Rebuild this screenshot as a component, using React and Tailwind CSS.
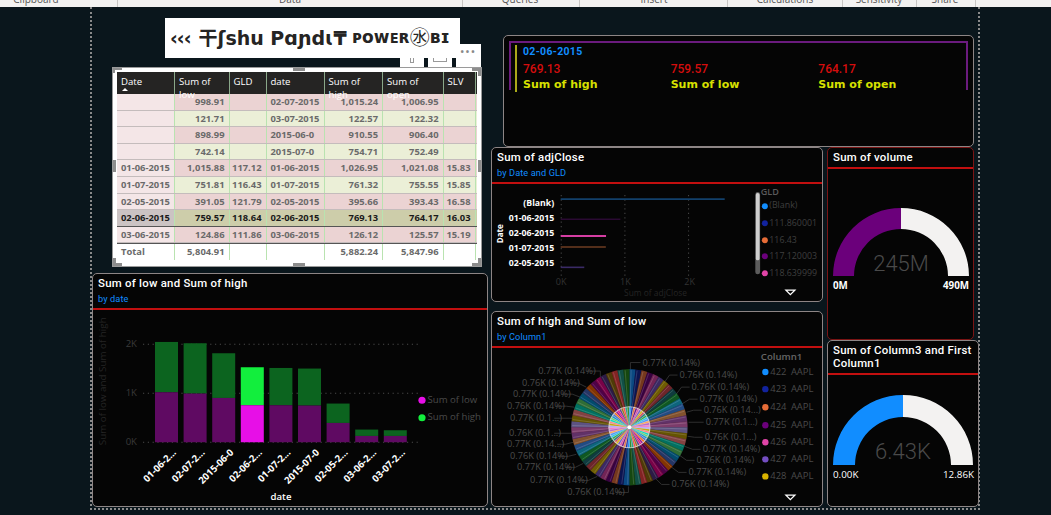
import React from "react";

const ribbon = [
  ["Clipboard", 116.5, 36],
  ["Data", 462, 290],
  ["Queries", 579, 520],
  ["Insert", 727, 654],
  ["Calculations", 842, 785],
  ["Sensitivity", 916, 879],
  ["Share", 975, 945],
];

const cols = [58, 54.5, 37, 58, 58.5, 60.5, 32];
const rows = [
  ["", "998.91", "", "02-07-2015", "1,015.24", "1,006.95", "", "p"],
  ["", "121.71", "", "03-07-2015", "122.57", "122.32", "", "g"],
  ["", "898.99", "", "2015-06-0", "910.55", "906.40", "", "p"],
  ["", "742.14", "", "2015-07-0", "754.71", "752.49", "", "g"],
  ["01-06-2015", "1,015.88", "117.12", "01-06-2015", "1,026.95", "1,021.08", "15.83", "p"],
  ["01-07-2015", "751.81", "116.43", "01-07-2015", "761.32", "755.55", "15.85", "g"],
  ["02-05-2015", "391.05", "121.79", "02-05-2015", "395.66", "393.43", "16.58", "p"],
  ["02-06-2015", "759.57", "118.64", "02-06-2015", "769.13", "764.17", "16.03", "h"],
  ["03-06-2015", "124.86", "111.86", "03-06-2015", "126.12", "125.57", "15.19", "p"],
];
const headers = ["Date", "Sum of low", "GLD", "date", "Sum of high", "Sum of open", "SLV"];
const rowBg = { p: "bg-[#ebd3d3]", g: "bg-[#ebefd7]", h: "bg-[#cdcdaa]" };

function Row({ cells, kind }) {
  const h = kind === "h";
  return (
    <div
      className={`flex h-[16.6px] border-b ${h ? "border-[#555] text-[#1a1a1a]" : "border-[#c4bcbc] text-[#6a6a6a]"} ${rowBg[kind]}`}
    >
      {cells.map((c, i) => (
        <div
          key={i}
          style={{ width: cols[i] }}
          className={`flex shrink-0 items-center border-r border-[#b9e3b0] px-[4px] leading-none ${
            i === 3 || i === 0 ? "justify-start" : "justify-end"
          } ${i === 0 ? (h ? "bg-[#cbc3c3]" : "bg-[#f4e6e7]") : ""}`}
        >
          {c}
        </div>
      ))}
    </div>
  );
}

function Table() {
  return (
    <div className="relative h-[198px] w-[368px] border-[4px] border-white bg-white font-['Open_Sans',sans-serif] text-[9.4px] font-bold outline outline-1 outline-[#9a9a9a]">
      <div className="flex h-[22px] bg-[#252423] font-normal text-white">
        {headers.map((c, i) => (
          <div
            key={i}
            style={{ width: cols[i] }}
            className="relative shrink-0 border-r border-[#8aa88a] px-[4px] pt-[3px] text-[9.6px] leading-[13px]"
          >
            {c}
            {i === 0 && <div className="absolute left-[5px] top-[16px] h-0 w-0 border-x-[3.5px] border-b-[3.5px] border-x-transparent border-b-white" />}
          </div>
        ))}
      </div>
      {rows.map((r, i) => (
        <Row key={i} cells={r.slice(0, 7)} kind={r[7]} />
      ))}
      <div className="flex h-[16.6px] border-t border-[#555] bg-white text-[#6a6a6a]">
        {["Total", "5,804.91", "", "", "5,882.24", "5,847.96", ""].map((c, i) => (
          <div
            key={i}
            style={{ width: cols[i] }}
            className={`flex shrink-0 items-center border-r border-[#b9e3b0] px-[4px] leading-none ${i === 0 ? "justify-start" : "justify-end"}`}
          >
            {c}
          </div>
        ))}
      </div>
      {/* selection handles */}
      <div className="absolute -left-[4px] -top-[4px] h-[5px] w-[9px] border-l-[2px] border-t-[2px] border-[#8d8d8d]" />
      <div className="absolute -right-[4px] -top-[4px] h-[8px] w-[9px] border-r-[3px] border-t-[3px] border-[#8d8d8d]" />
      <div className="absolute -bottom-[4px] -left-[4px] h-[8px] w-[9px] border-b-[3px] border-l-[3px] border-[#8d8d8d]" />
      <div className="absolute -bottom-[4px] -right-[4px] h-[8px] w-[9px] border-b-[3px] border-r-[3px] border-[#8d8d8d]" />
      <div className="absolute -top-[4px] left-[176px] h-[3px] w-[12px] bg-[#8d8d8d]" />
      <div className="absolute -bottom-[4px] left-[176px] h-[3px] w-[12px] bg-[#8d8d8d]" />
      <div className="absolute -left-[4px] top-[88px] h-[12px] w-[3px] bg-[#8d8d8d]" />
      <div className="absolute -right-[4px] top-[88px] h-[12px] w-[3px] bg-[#8d8d8d]" />
      {/* visual header */}
      <div className="absolute -top-[14px] left-[283px] flex h-[9px] w-[24px] items-start justify-center bg-white">
        <div className="h-[5px] w-[4px] border-x border-b border-[#999]" />
      </div>
      <div className="absolute -top-[14px] left-[311px] flex h-[9px] w-[24px] items-start justify-center bg-white">
        <div className="h-[4px] w-[14px] border-x border-b border-[#999]" />
      </div>
      <div className="absolute -top-[28px] left-[339px] flex h-[23px] w-[25px] items-center justify-center bg-white pb-[8px] text-[9px] font-bold tracking-[2px] text-[#888]">
        •••
      </div>
    </div>
  );
}

function Card({ title, sub, className = "", border = "border-[#8d8585]", children, lineW = "" }) {
  return (
    <div className={`flex flex-col overflow-hidden rounded-[5px] border bg-[#050505] ${border} ${className}`}>
      <div className="px-[5px] pt-[3px] font-['Roboto',sans-serif] text-white">
        <div className="text-[11.4px] font-medium leading-[13px] tracking-[0.25px]">{title}</div>
        {sub && <div className="mt-[2.5px] text-[9.2px] leading-[12px] tracking-[0.1px] text-[#118dff]">{sub}</div>}
      </div>
      <div className={`mt-[3px] h-[2px] shrink-0 bg-[#c20f0f] ${lineW}`} />
      <div className="relative min-h-0 flex-1">{children}</div>
    </div>
  );
}

const T = ({ x, y, a = "start", c = "fill-[#4a4a4a]", s = "text-[9.6px]", w = "", children, ...p }) => (
  <text x={x} y={y} textAnchor={a} dominantBaseline="middle" className={`font-['Open_Sans',sans-serif] ${c} ${s} ${w}`} {...p}>
    {children}
  </text>
);

const barData = [
  ["01-06-2...", 341.7, 392],
  ["02-07-2...", 343, 393.3],
  ["2015-06-0", 353, 397.7],
  ["02-06-2...", 367, 405],
  ["01-07-2...", 367.7, 405],
  ["2015-07-0", 368.3, 405.3],
  ["02-05-2...", 403.3, 422.7],
  ["03-06-2...", 429.3, 435.7],
  ["03-07-2...", 430, 435.7],
];

function BarChart() {
  return (
    <svg className="absolute left-0 top-0 block h-full w-full" viewBox="93 310 394 196">
      {[[344, "2K"], [393, "1K"], [442, "0K"]].map(([y, l]) => (
        <g key={l}>
          <line x1="143" x2="419" y1={y} y2={y} stroke="#4a4a4a" strokeDasharray="1.2 3.6" />
          <T x={137} y={y} a="end" c="fill-[#3a3a3a]" s="text-[9.6px]">{l}</T>
        </g>
      ))}
      <T x={0} y={0} a="middle" c="fill-[#242424]" s="text-[9.8px]" transform="translate(103.5 381) rotate(-90)">
        Sum of low and Sum of high
      </T>
      {barData.map(([l, top, mid], i) => {
        const x = 155 + i * 28.6;
        const h = i === 3;
        return (
          <g key={i}>
            <rect x={x} y={top} width={23} height={mid - top} fill={h ? "#12ee3d" : "#0c641f"} />
            <rect x={x} y={mid} width={23} height={442 - mid} fill={h ? "#e70fe7" : "#5f0a62"} />
            <T x={0} y={0} a="end" c="fill-white" s="text-[9.6px]" w="font-bold" transform={`translate(${x + 20} 451) rotate(-45)`}>
              {l}
            </T>
          </g>
        );
      })}
      <circle cx="422" cy="400" r="3.6" fill="#e70fe7" />
      <T x={427.5} y={400} c="fill-[#4a4a4a]" s="text-[9.6px]">Sum of low</T>
      <circle cx="422" cy="417.5" r="3.6" fill="#12ee3d" />
      <T x={427.5} y={417.5} c="fill-[#4a4a4a]" s="text-[9.6px]">Sum of high</T>
      <T x={281} y={497} a="middle" c="fill-white" s="text-[9.6px]" w="font-semibold">date</T>
    </svg>
  );
}

function AdjChart() {
  const labels = [["(Blank)", 204], ["01-06-2015", 219], ["02-06-2015", 233], ["01-07-2015", 248], ["02-05-2015", 263]];
  const bars = [[724, 199, "#12406b", 1.6], [620, 219, "#2a0a33", 1.6], [605.7, 235.7, "#d63ea3", 2], [605.5, 246.7, "#6e3c22", 1.6], [584, 267, "#3a2a66", 1.6]];
  const legend = [["(Blank)", 206, "#118dff"], ["111.860001", 223, "#12239e"], ["116.43", 240, "#e66c37"], ["117.120003", 256, "#6b007b"], ["118.639999", 273, "#e044a7"]];
  return (
    <svg className="absolute left-0 top-0 block h-full w-full" viewBox="492 184 329 117">
      {[561, 624.5, 688].map((x) => (
        <line key={x} x1={x} x2={x} y1="195" y2="276" stroke="#4a4a4a" strokeDasharray="1.2 3.2" />
      ))}
      {bars.map(([x2, y, c, w], i) => (
        <line key={i} x1="560.5" x2={x2} y1={y} y2={y} stroke={c} strokeWidth={w} />
      ))}
      {labels.map(([l, y]) => (
        <T key={l} x={554} y={y} a="end" c="fill-white" s="text-[8.7px]" w="font-bold">{l}</T>
      ))}
      <T x={0} y={0} a="middle" c="fill-white" s="text-[8px]" w="font-bold" transform="translate(500.5 233.5) rotate(-90)">Date</T>
      {[[561, "0K"], [625, "1K"], [689, "2K"]].map(([x, l]) => (
        <T key={l} x={x} y={282} a="middle" c="fill-[#333]" s="text-[9px]">{l}</T>
      ))}
      <T x={655} y={293} a="middle" c="fill-[#242424]" s="text-[8.4px]">Sum of adjClose</T>
      <rect x="754.5" y="192" width="4.8" height="82" rx="2.4" fill="#5c5c5c" />
      <rect x="755" y="193" width="3.8" height="67" rx="1.9" fill="#cfcfcf" />
      <T x={760} y={193} c="fill-[#5a5a5a]" s="text-[9px]" w="font-semibold">GLD</T>
      {legend.map(([l, y, c]) => (
        <g key={l}>
          <circle cx="764" cy={y} r="3" fill={c} />
          <T x={768.5} y={y} c="fill-[#3f3f3f]" s="text-[8.8px]">{l}</T>
        </g>
      ))}
      <path d="M783.5 289 h12 l-6 6 z" fill="#fff" />
      <path d="M786.5 290.3 h6 l-3 3 z" fill="#050505" />
    </svg>
  );
}

const palette = ["#118dff", "#12239e", "#e66c37", "#6b007b", "#e044a7", "#744ec2", "#d9b300", "#d64550", "#197278", "#1aab40", "#15c6f4", "#4092ff", "#ffa058", "#be5dc9", "#f472d0", "#b5a1ff", "#c4a200", "#ff8080", "#00dbbc", "#5bd667", "#0091d5", "#4668c5", "#ff6300", "#99008a", "#ec008c", "#533285", "#99700a", "#ff4141", "#1f9a85", "#25891c"];

const pieLabels = [
  ["0.77K (0.14%)", 642, 363, "M630 369V362.5H640"],
  ["0.76K (0.14%)", 679, 375, "M664 382L669 375H677"],
  ["0.76K (0.14%)", 691, 387, "M675 395L681 387H689"],
  ["0.77K (0.14%)", 699, 399, "M681 404L689 399H697"],
  ["0.76K (0.14...)", 703, 410, "M686 412L693 410H701"],
  ["0.77K (0.1...)", 705, 422, "M688 422H703"],
  ["0.76K (0.1...)", 704, 437, "M687 436L694 437H702"],
  ["0.77K (0.14%)", 702, 449, "M684 446L692 449H700"],
  ["0.76K (0.14%)", 696, 460, "M679 455L686 460H694"],
  ["0.77K (0.14%)", 688, 472, "M670 466L678 472H686"],
  ["0.76K (0.14%)", 671, 484, "M655 478L661 484H669"],
  ["0.76K (0.14%)", 567, 492, "M628 486V492H618"],
  ["0.77K (0.14%)", 530, 480, "M597 476L588 480H581"],
  ["0.77K (0.14%)", 517, 467, "M583 463L575 467H567"],
  ["0.76K (0.14%)", 510, 456, "M576 454L568 456H561"],
  ["0.77K (0.14...)", 507, 444, "M573 442L565 444H557"],
  ["0.76K (0.1...)", 509, 433, "M571 433H554"],
  ["0.77K (0.1...)", 510, 418, "M572 418H554"],
  ["0.76K (0.14%)", 507, 406, "M574 407L566 406H558"],
  ["0.77K (0.14%)", 513, 394, "M580 397L572 394H564"],
  ["0.76K (0.14%)", 522, 383, "M586 387L578 383H573"],
  ["0.77K (0.14%)", 538, 371, "M600 377L600 371H589"],
];

function slice(cx, cy, r, a0, a1) {
  const p = (a, R) => [(cx + R * Math.sin(a)).toFixed(2), (cy - R * Math.cos(a)).toFixed(2)].join(" ");
  return `M${cx} ${cy}L${p(a0, r)}A${r} ${r} 0 0 1 ${p(a1, r)}Z`;
}

function Pie() {
  const n = 60;
  const cx = 629;
  const cy = 427;
  const items = Array.from({ length: n }, (_, i) => {
    const a0 = (i / n) * Math.PI * 2;
    const a1 = ((i + 1) / n) * Math.PI * 2;
    return { a0, a1, c: palette[i % palette.length] };
  });
  const legend = [["422", 372, "#118dff"], ["423", 389, "#12239e"], ["424", 407, "#e66c37"], ["425", 425, "#6b007b"], ["426", 442, "#e044a7"], ["427", 459, "#744ec2"], ["428", 476, "#d9b300"]];
  return (
    <svg className="absolute left-0 top-0 block h-full w-full" viewBox="492 348 329 158">
      {pieLabels.map(([l, x, y, d], i) => (
        <g key={i}>
          <path d={d} fill="none" stroke="#3a3a3a" strokeWidth="0.8" />
          <T x={x} y={y} c="fill-[#4c4c4c]" s="text-[9.2px]">{l}</T>
        </g>
      ))}
      {items.map((s, i) => (
        <path key={i} d={slice(cx, cy, 58, s.a0, s.a1)} fill={s.c} fillOpacity="0.5" />
      ))}
      {items.map((s, i) => (
        <line
          key={`l${i}`}
          x1={cx + 21 * Math.sin(s.a0 + 0.03)}
          y1={cy - 21 * Math.cos(s.a0 + 0.03)}
          x2={cx + 57 * Math.sin(s.a0 + 0.03)}
          y2={cy - 57 * Math.cos(s.a0 + 0.03)}
          stroke="#ffffff"
          strokeOpacity="0.22"
          strokeWidth="0.7"
        />
      ))}
      <circle cx={cx} cy={cy} r="21" fill="#ffffff" fillOpacity="0.75" />
      {items.map((s, i) => (
        <path key={`i${i}`} d={slice(cx, cy, 20, s.a0, s.a0 + (s.a1 - s.a0) * 0.75)} fill={s.c} fillOpacity={0.9} />
      ))}
      <circle cx={cx} cy={cy} r="2" fill="#fff" />
      <T x={760} y={357} c="fill-[#666]" s="text-[9.6px]" w="font-semibold">Column1</T>
      {legend.map(([l, y, c]) => (
        <g key={l}>
          <circle cx="764.5" cy={y} r="3.2" fill={c} />
          <T x={769.5} y={y} c="fill-[#4a4a4a]" s="text-[9.4px]">{l}</T>
          <T x={790} y={y} c="fill-[#4a4a4a]" s="text-[9.4px]">AAPL</T>
        </g>
      ))}
      <path d="M783.5 494 h12 l-6 6 z" fill="#fff" />
      <path d="M786.5 495.3 h6 l-3 3 z" fill="#050505" />
    </svg>
  );
}

function arc(cx, cy, R, r, from, to) {
  const p = (a, q) => [(cx + q * Math.cos(a)).toFixed(2), (cy - q * Math.sin(a)).toFixed(2)].join(" ");
  return `M${p(from, R)}A${R} ${R} 0 0 1 ${p(to, R)}L${p(to, r)}A${r} ${r} 0 0 0 ${p(from, r)}Z`;
}

function Gauge({ viewBox, cx, cy, R, r, color, value, vy, lo, hi, loX, hiX, ly, bold }) {
  const [, , w, h] = viewBox.split(" ");
  return (
    <svg className="absolute left-0 top-0 block" width={w} height={h} viewBox={viewBox}>
      <path d={arc(cx, cy, R, r, Math.PI, Math.PI / 2)} fill={color} />
      <path d={arc(cx, cy, R, r, Math.PI / 2, 0)} fill="#f3f2f1" />
      <T x={cx} y={vy} a="middle" c="fill-[#4a4a4a]" s="text-[22px]" w="font-light" style={{ fontFamily: "Roboto" }}>{value}</T>
      <T x={loX} y={ly} c="fill-white" s="text-[9.8px]" w={bold ? "font-bold" : ""}>{lo}</T>
      <T x={hiX} y={ly} a="end" c="fill-white" s="text-[9.8px]" w={bold ? "font-bold" : ""}>{hi}</T>
    </svg>
  );
}

export default function App() {
  return (
    <div className="flex h-[515px] w-[1051px] flex-col overflow-hidden bg-[#0a161c]">
      <div className="relative h-[7px] shrink-0 overflow-hidden bg-[#f3f2f1] font-['Open_Sans',sans-serif] text-[10px] text-[#555]">
        {ribbon.map(([l, sep, c]) => (
          <React.Fragment key={l}>
            <span className="absolute -top-[8px] -translate-x-1/2 whitespace-nowrap" style={{ left: c }}>{l}</span>
            <span className="absolute top-0 h-[7px] w-px bg-[#c8c6c4]" style={{ left: sep }} />
          </React.Fragment>
        ))}
      </div>
      <div className="ml-[90px] flex h-[503px] w-[890px] shrink-0 gap-[3px] border-x-2 border-b-2 border-dotted border-[#8a8a8a]">
        <div className="flex w-[396px] shrink-0 flex-col">
          <div className="ml-[73px] mt-[11px] flex h-[40px] w-[295px] items-center whitespace-nowrap bg-white pl-[5px] font-['DejaVu_Sans','Noto_Sans_CJK_SC',sans-serif] text-[19px] font-bold text-[#252423]">
            <span className="tracking-[-1px]">‹‹‹</span>
            <span className="ml-[8px]">干ʃshu Pɑɲdɩ₸</span>
            <span className="ml-[6px] text-[17px]">ᴘᴏᴡᴇʀ</span>
            <span className="text-[20px] font-normal">㊌</span>
            <span className="text-[17px]">ʙɪ</span>
          </div>
          <div className="ml-[21px] mt-[10px]">
            <Table />
          </div>
          <Card title="Sum of low and Sum of high" sub="by date" className="mt-[7px] h-[234px]">
            <BarChart />
          </Card>
        </div>
        <div className="flex min-w-0 flex-1 flex-col">
          <div className="ml-[12px] mt-[28px] h-[112px] w-[471px] shrink-0 rounded-[5px] border border-[#8d8585] bg-[#050505] px-[5px] pt-[5px]">
            <div className="h-[49px] border-x-2 border-t-2 border-[#6b1b7e] pl-[4px] pt-[2px]">
              <div className="h-[47px] border-l-2 border-[#a9a91a] pl-[6px] font-['DejaVu_Sans',sans-serif]">
                <div className="font-['Roboto',sans-serif] text-[10.5px] font-bold leading-[14px] tracking-[0.3px] text-[#118dff]">02-06-2015</div>
                <div className="mt-[2px] grid grid-cols-3 font-['Roboto',sans-serif] text-[12px] font-medium leading-[16px] text-[#d50d0d]">
                  <div>769.13</div>
                  <div>759.57</div>
                  <div>764.17</div>
                </div>
                <div className="grid grid-cols-3 text-[11px] font-bold leading-[15px] text-[#d7e000]">
                  <div>Sum of high</div>
                  <div>Sum of low</div>
                  <div>Sum of open</div>
                </div>
              </div>
            </div>
          </div>
          <div className="flex min-h-0 flex-1">
            <div className="flex w-[332px] shrink-0 flex-col">
              <Card title="Sum of adjClose" sub="by Date and GLD" className="h-[155px]">
                <AdjChart />
              </Card>
              <Card title="Sum of high and Sum of low" sub="by Column1" className="mt-[9px] h-[196px]">
                <Pie />
              </Card>
            </div>
            <div className="ml-[4px] flex flex-col">
              <Card title="Sum of volume" border="border-[#7a1414]" className="h-[193px] w-[147px]">
                <Gauge viewBox="828 170 145 168" cx={901} cy={277} R={68} r={47} color="#6b007b" value="245M" vy={266} lo="0M" hi="490M" loX={833} hiX={969} ly={287} bold />
              </Card>
              <Card title="Sum of Column3 and First Column1" className="h-[167px] w-[152px]">
                <Gauge viewBox="828 375 150 130" cx={903} cy={465} R={70} r={48} color="#118dff" value="6.43K" vy={453} lo="0.00K" hi="12.86K" loX={833} hiX={974} ly={475} />
              </Card>
            </div>
          </div>
        </div>
      </div>
    </div>
  );
}
